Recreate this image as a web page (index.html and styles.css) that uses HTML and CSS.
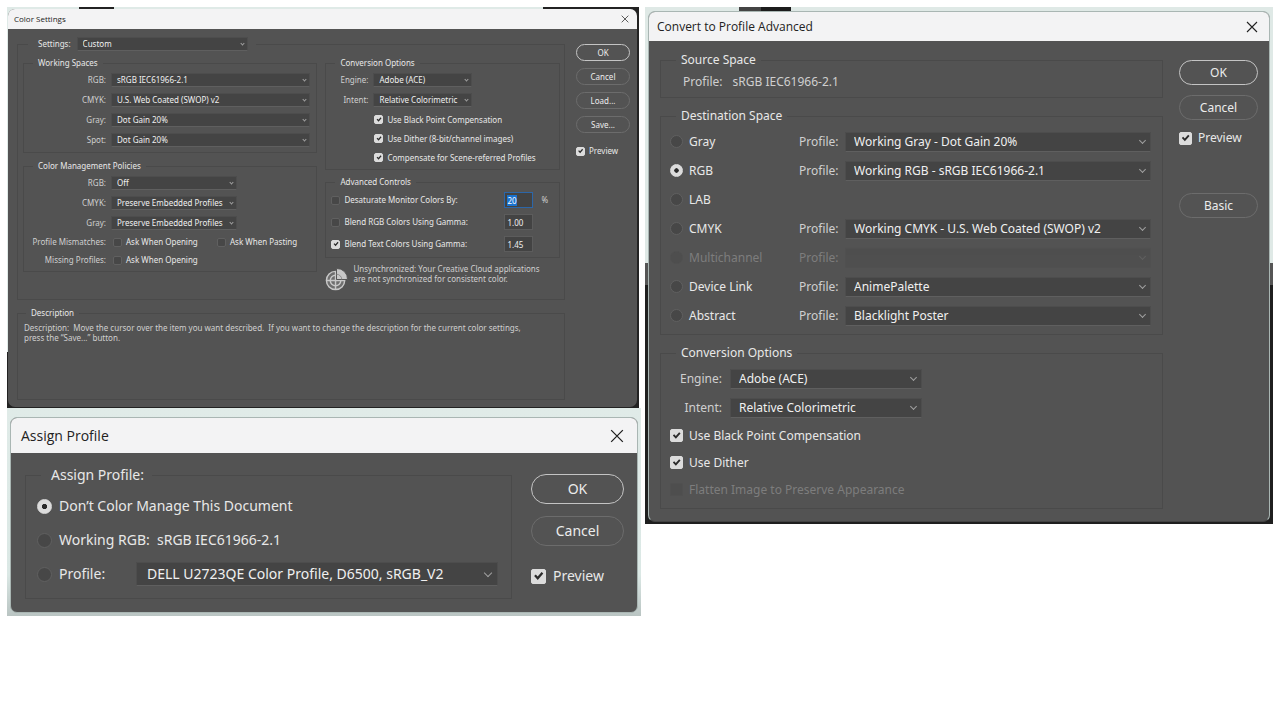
FILE: index.html
```html
<!DOCTYPE html>
<html lang="en">

<head>
  <meta charset="UTF-8">
  <meta name="viewport" content="width=device-width, initial-scale=1.0">
  <title>Photoshop color dialogs</title>
  <link rel="stylesheet" href="styles.css">
</head>

<body>
  <main class="page">
    <div class="column">
      <section class="shot shot-settings">
        <form class="dialog small">
          <header class="titlebar">
            <h2>Color Settings</h2>
            <button type="button" class="close" aria-label="Close"><svg viewBox="0 0 12 12"><path d="M1 1L11 11M11 1L1 11"/></svg></button>
          </header>
          <div class="body">
            <div class="groups">
              <fieldset class="outer">
                <legend>
                  <label for="settings">Settings:</label>
                  <span class="select"><select id="settings"><option>Custom</option></select></span>
                </legend>
                <div class="stack">
                  <fieldset>
                    <legend>Working Spaces</legend>
                    <div class="row"><label class="name" for="ws-rgb">RGB:</label><span class="select"><select id="ws-rgb"><option>sRGB IEC61966-2.1</option></select></span></div>
                    <div class="row"><label class="name" for="ws-cmyk">CMYK:</label><span class="select"><select id="ws-cmyk"><option>U.S. Web Coated (SWOP) v2</option></select></span></div>
                    <div class="row"><label class="name" for="ws-gray">Gray:</label><span class="select"><select id="ws-gray"><option>Dot Gain 20%</option></select></span></div>
                    <div class="row"><label class="name" for="ws-spot">Spot:</label><span class="select"><select id="ws-spot"><option>Dot Gain 20%</option></select></span></div>
                  </fieldset>
                  <fieldset class="policies">
                    <legend>Color Management Policies</legend>
                    <div class="row"><label class="name" for="p-rgb">RGB:</label><span class="select"><select id="p-rgb"><option>Off</option></select></span></div>
                    <div class="row"><label class="name" for="p-cmyk">CMYK:</label><span class="select"><select id="p-cmyk"><option>Preserve Embedded Profiles</option></select></span></div>
                    <div class="row"><label class="name" for="p-gray">Gray:</label><span class="select"><select id="p-gray"><option>Preserve Embedded Profiles</option></select></span></div>
                    <div class="row asks">
                      <span class="name">Profile Mismatches:</span>
                      <label class="check"><input type="checkbox">Ask When Opening</label>
                      <label class="check"><input type="checkbox">Ask When Pasting</label>
                    </div>
                    <div class="row asks">
                      <span class="name">Missing Profiles:</span>
                      <label class="check"><input type="checkbox">Ask When Opening</label>
                    </div>
                  </fieldset>
                </div>
                <div class="stack right">
                  <fieldset class="conversion">
                    <legend>Conversion Options</legend>
                    <div class="row"><label class="name" for="cs-engine">Engine:</label><span class="select"><select id="cs-engine"><option>Adobe (ACE)</option></select></span></div>
                    <div class="row"><label class="name" for="cs-intent">Intent:</label><span class="select"><select id="cs-intent"><option>Relative Colorimetric</option></select></span></div>
                    <label class="check"><input type="checkbox" checked>Use Black Point Compensation</label>
                    <label class="check"><input type="checkbox" checked>Use Dither (8-bit/channel images)</label>
                    <label class="check"><input type="checkbox" checked>Compensate for Scene-referred Profiles</label>
                  </fieldset>
                  <fieldset class="advanced">
                    <legend>Advanced Controls</legend>
                    <div class="row">
                      <label class="check"><input type="checkbox">Desaturate Monitor Colors By:</label>
                      <input type="text" class="num" id="desaturate" value="20" aria-label="Desaturate percent">
                      <span class="unit">%</span>
                    </div>
                    <div class="row">
                      <label class="check"><input type="checkbox">Blend RGB Colors Using Gamma:</label>
                      <input type="text" class="num" value="1.00" aria-label="RGB gamma">
                    </div>
                    <div class="row">
                      <label class="check"><input type="checkbox" checked>Blend Text Colors Using Gamma:</label>
                      <input type="text" class="num" value="1.45" aria-label="Text gamma">
                    </div>
                  </fieldset>
                  <div class="sync">
                    <svg class="sync-icon" viewBox="0 0 24 24">
                      <circle class="disc" cx="11" cy="13" r="10"/>
                      <circle cx="11" cy="13" r="9.5"/>
                      <circle cx="11" cy="13" r="5.5"/>
                      <path d="M1 13H21M11 4V23"/>
                      <path class="wedge" d="M12 12V0.500A11 11 0 0 1 23.500 12Z"/>
                      <path class="wedge-line" d="M12 6.500A5.500 5.500 0 0 1 17.500 12"/>
                    </svg>
                    <p>Unsynchronized: Your Creative Cloud applications<br>are not synchronized for consistent color.</p>
                  </div>
                </div>
              </fieldset>
              <fieldset class="description">
                <legend>Description</legend>
                <p>Description:&nbsp; Move the cursor over the item you want described.&nbsp; If you want to change the description for the current color settings,<br>press the “Save...” button.</p>
              </fieldset>
            </div>
            <div class="actions">
              <button type="button" class="primary">OK</button>
              <button type="button">Cancel</button>
              <button type="button">Load...</button>
              <button type="button">Save...</button>
              <label class="check"><input type="checkbox" checked>Preview</label>
            </div>
          </div>
        </form>
      </section>

      <section class="shot shot-assign">
        <form class="dialog large">
          <header class="titlebar">
            <h2>Assign Profile</h2>
            <button type="button" class="close" aria-label="Close"><svg viewBox="0 0 12 12"><path d="M1 1L11 11M11 1L1 11"/></svg></button>
          </header>
          <div class="body">
            <div class="groups">
              <fieldset>
                <legend>Assign Profile:</legend>
                <div class="row"><label class="check"><input type="radio" name="assign" checked>Don’t Color Manage This Document</label></div>
                <div class="row"><label class="check"><input type="radio" name="assign">Working RGB:&nbsp; sRGB IEC61966-2.1</label></div>
                <div class="row">
                  <label class="check profile"><input type="radio" name="assign">Profile:</label>
                  <span class="select"><select aria-label="Profile"><option>DELL U2723QE Color Profile, D6500, sRGB_V2</option></select></span>
                </div>
              </fieldset>
            </div>
            <div class="actions">
              <button type="button" class="primary">OK</button>
              <button type="button">Cancel</button>
              <label class="check"><input type="checkbox" checked>Preview</label>
            </div>
          </div>
        </form>
      </section>
    </div>

    <section class="shot shot-convert">
      <form class="dialog medium">
        <header class="titlebar">
          <h2>Convert to Profile Advanced</h2>
          <button type="button" class="close" aria-label="Close"><svg viewBox="0 0 12 12"><path d="M1 1L11 11M11 1L1 11"/></svg></button>
        </header>
        <div class="body">
          <div class="groups">
            <fieldset class="source">
              <legend>Source Space</legend>
              <p><span>Profile:</span><span>sRGB IEC61966-2.1</span></p>
            </fieldset>
            <fieldset class="destination">
              <legend>Destination Space</legend>
              <div class="row">
                <label class="check"><input type="radio" name="space">Gray</label>
                <label class="name" for="d-gray">Profile:</label>
                <span class="select"><select id="d-gray"><option>Working Gray - Dot Gain 20%</option></select></span>
              </div>
              <div class="row">
                <label class="check"><input type="radio" name="space" checked>RGB</label>
                <label class="name" for="d-rgb">Profile:</label>
                <span class="select"><select id="d-rgb"><option>Working RGB - sRGB IEC61966-2.1</option></select></span>
              </div>
              <div class="row">
                <label class="check"><input type="radio" name="space">LAB</label>
              </div>
              <div class="row">
                <label class="check"><input type="radio" name="space">CMYK</label>
                <label class="name" for="d-cmyk">Profile:</label>
                <span class="select"><select id="d-cmyk"><option>Working CMYK - U.S. Web Coated (SWOP) v2</option></select></span>
              </div>
              <div class="row disabled">
                <label class="check"><input type="radio" name="space" disabled>Multichannel</label>
                <label class="name" for="d-multi">Profile:</label>
                <span class="select"><select id="d-multi" disabled><option></option></select></span>
              </div>
              <div class="row">
                <label class="check"><input type="radio" name="space">Device Link</label>
                <label class="name" for="d-link">Profile:</label>
                <span class="select"><select id="d-link"><option>AnimePalette</option></select></span>
              </div>
              <div class="row">
                <label class="check"><input type="radio" name="space">Abstract</label>
                <label class="name" for="d-abstract">Profile:</label>
                <span class="select"><select id="d-abstract"><option>Blacklight Poster</option></select></span>
              </div>
            </fieldset>
            <fieldset class="conversion">
              <legend>Conversion Options</legend>
              <div class="row"><label class="name" for="cv-engine">Engine:</label><span class="select"><select id="cv-engine"><option>Adobe (ACE)</option></select></span></div>
              <div class="row"><label class="name" for="cv-intent">Intent:</label><span class="select"><select id="cv-intent"><option>Relative Colorimetric</option></select></span></div>
              <label class="check"><input type="checkbox" checked>Use Black Point Compensation</label>
              <label class="check"><input type="checkbox" checked>Use Dither</label>
              <label class="check disabled"><input type="checkbox" disabled>Flatten Image to Preserve Appearance</label>
            </fieldset>
          </div>
          <div class="actions">
            <button type="button" class="primary">OK</button>
            <button type="button">Cancel</button>
            <label class="check"><input type="checkbox" checked>Preview</label>
            <button type="button" class="basic">Basic</button>
          </div>
        </div>
      </form>
    </section>
  </main>
  <script>
    document.querySelector("#desaturate").select();
  </script>
</body>

</html>
```
FILE: styles.css
```css
*,
*::before,
*::after {
  box-sizing: border-box;
}

body {
  margin: 0;
  background: #fff;
}

.page {
  display: grid;
  grid-template-columns: minmax(0, 634fr) minmax(0, 628fr);
  align-items: start;
  gap: 4px;
  padding: 7px;
}

/* desktop strips behind the dialogs */
.shot-settings {
  margin-right: 2px;
  padding: 2px 2px 1px 1px;
  background:
    linear-gradient(#222, #222) 72px 0 / 35px 2px no-repeat,
    linear-gradient(#222, #222) 100% 0 / 96px 2px no-repeat,
    linear-gradient(#222, #222) 100% 0 / 20px 100% no-repeat,
    linear-gradient(#dfeae7 345px, #222 345px);
}

.shot-assign {
  padding: 9px 3px 3px 3px;
  background: linear-gradient(#e0ebe8, #dbe8e5 80%, #b9c4c2);
}

.shot-convert {
  padding: 4px 3px 2px 3px;
  background:
    linear-gradient(90deg, #444 22px, #1c1c1c 22px) 94px 0 / 52px 5px no-repeat,
    linear-gradient(#dfe9e6 256px, #555 256px, #555 278px, #1f1f1f 278px);
}

.dialog {
  overflow: hidden;
  border-radius: 7px;
  background: #535353;
  color: #e8e8e8;
  font: var(--text) / var(--line) "Noto Sans", Tahoma, sans-serif;
}

.small {
  --text: 8px;
  --line: 12px;
  --row: 20px;
  --control: 14px;
  --mark: 9px;
  --mark-gap: 4px;
  --inset: 5px;
  --arrow: 3px;
}

.medium {
  --text: 12px;
  --line: 16px;
  --row: 29px;
  --control: 20px;
  --mark: 13px;
  --mark-gap: 6px;
  --inset: 8px;
  --arrow: 5px;
  border: 1px solid #a9b6b3;
  border-bottom-color: #444;
}

.large {
  --text: 14px;
  --line: 20px;
  --row: 34px;
  --control: 24px;
  --mark: 15px;
  --mark-gap: 7px;
  --inset: 10px;
  --arrow: 6px;
  border: 1px solid #a9b6b3;
}

.titlebar {
  display: flex;
  align-items: center;
  justify-content: space-between;
  background: #f3f3f4;
  color: #222;
}

.small .titlebar {
  height: 20px;
  padding: 0 8px 0 6px;
}

.medium .titlebar {
  height: 29px;
  padding: 0 11px 0 8px;
}

.large .titlebar {
  height: 35px;
  padding: 0 13px 0 10px;
}

h2 {
  margin: 0;
  font: var(--text) / var(--line) "Open Sans", "Noto Sans", sans-serif;
}

.close {
  display: flex;
  padding: 0;
  border: 0;
  background: none;
}

.close svg {
  width: var(--text);
  height: var(--text);
  fill: none;
  stroke: #222;
  stroke-width: 1.1;
}

.body {
  display: flex;
}

.small .body {
  gap: 11px;
  padding: 8px 7px 7px 9px;
}

.medium .body {
  gap: 16px;
  padding: 11px 11px 12px 11px;
}

.large .body {
  gap: 19px;
  padding: 12px 13px 13px 14px;
}

.groups {
  display: flex;
  flex: 1;
  flex-direction: column;
  min-width: 0;
}

.small .groups {
  gap: 7px;
}

.medium .groups {
  gap: 10px;
}

fieldset {
  min-width: 0;
  margin: 0;
  padding: 0;
  border: 1px solid #4a4a4a;
}

legend {
  margin-left: 9px;
  padding: 0 5px;
}

p {
  margin: 0;
}

.row {
  display: flex;
  align-items: center;
  height: var(--row);
}

.name {
  color: #cfcfcf;
}

.select {
  position: relative;
  display: flex;
  flex: 1;
}

.select::after {
  content: "";
  position: absolute;
  top: calc(50% - var(--arrow) / 2 - 1px);
  right: calc(var(--arrow) + 1px);
  width: var(--arrow);
  height: var(--arrow);
  border: solid #a0a0a0;
  border-width: 0 1px 1px 0;
  transform: rotate(45deg);
  pointer-events: none;
}

select {
  width: 100%;
  height: var(--control);
  padding: 0 var(--inset);
  border: 1px solid #4d4d4d;
  border-bottom-color: #5f5f5f;
  border-radius: 1px;
  appearance: none;
  background: #444;
  color: #f0f0f0;
  font: inherit;
}

.check {
  display: flex;
  align-items: center;
  gap: var(--mark-gap);
  white-space: nowrap;
}

.check input {
  position: relative;
  flex: none;
  width: var(--mark);
  height: var(--mark);
  margin: 0;
  border: 1px solid #606060;
  border-radius: 2px;
  appearance: none;
  background: #474747;
}

.check input:checked {
  border-color: #dcdcdc;
  background: #dcdcdc;
}

.check input[type="checkbox"]:checked::before {
  content: "";
  position: absolute;
  inset: 10%;
  background: #2b2b2b;
  clip-path: polygon(8% 50%, 24% 36%, 42% 56%, 80% 12%, 96% 26%, 43% 88%);
}

.check input[type="radio"] {
  border-radius: 50%;
}

.check input[type="radio"]:checked {
  background: radial-gradient(circle, #2b2b2b 25%, #dcdcdc 32%);
}

.disabled,
.disabled .name {
  color: #7d7d7d;
}

.disabled input,
.disabled select {
  border-color: #505050;
  background: #4e4e4e;
}

.disabled .select::after {
  border-color: #606060;
}

.actions {
  display: flex;
  flex: none;
  flex-direction: column;
}

.actions button {
  padding: 0;
  border: 1px solid #6c6c6c;
  border-radius: 20px;
  background: none;
  color: #ececec;
  font: inherit;
}

.actions .primary {
  border-color: #c4c4c4;
}

/* Color Settings */
.small .actions {
  gap: 7px;
  width: 54px;
  padding-top: 7px;
}

.small .actions button {
  height: 17px;
}

.small .actions .check {
  margin-top: 5px;
}

.outer {
  display: grid;
  grid-template-columns: minmax(0, 295fr) minmax(0, 235fr);
  gap: 8px;
  padding: 6px 4px 8px 5px;
}

.outer > legend {
  display: flex;
  align-items: center;
  gap: 6px;
  margin-left: 5px;
  padding: 0 8px 0 10px;
}

.outer > legend .select {
  width: 171px;
}

.stack {
  display: flex;
  flex-direction: column;
  gap: 7px;
}

.stack.right {
  gap: 6px;
}

.stack fieldset {
  padding: 1px 6px 2px 0;
}

.stack .name {
  flex: none;
  width: 82px;
  margin-right: 5px;
  text-align: right;
}

.policies .select {
  flex: none;
  width: 126px;
}

.row.asks {
  height: 18px;
}

.asks .name {
  margin-right: 7px;
}

.asks .check {
  flex: none;
  width: 104px;
}

.policies .asks .check:last-child {
  width: auto;
}

.stack .conversion .name {
  width: 42px;
}

.right .select {
  flex: none;
  width: 99px;
}

.conversion > .check {
  height: 19px;
  padding-left: 48px;
}

.advanced .row {
  height: 22px;
  padding-left: 5px;
}

.advanced .check {
  width: 173px;
}

.num {
  width: 29px;
  height: 16px;
  padding: 0 2px;
  border: 1px solid #5c5c5c;
  background: #434343;
  color: #f0f0f0;
  font: inherit;
}

.num:focus {
  border-color: #2c66a8;
  outline: 0;
}

.num::selection {
  background: #1a73d0;
  color: #fff;
}

.unit {
  margin-left: 8px;
  color: #cfcfcf;
}

.sync {
  display: flex;
  gap: 5px;
  color: #cfcfcf;
  line-height: 10px;
  white-space: nowrap;
}

.sync-icon {
  flex: none;
  width: 23px;
  height: 23px;
  margin-top: 4px;
  fill: none;
  stroke: #c8c8c8;
  stroke-width: 1.5;
}

.sync-icon .disc {
  fill: #6e6e6e;
  stroke: none;
}

.sync-icon .wedge {
  fill: #c8c8c8;
  stroke: #535353;
  stroke-width: 1;
}

.sync-icon .wedge-line {
  stroke: #8a8a8a;
  stroke-width: 1;
}

.description {
  padding: 4px 6px 56px;
  color: #cfcfcf;
  line-height: 10px;
}

.description legend {
  margin-left: 2px;
  color: #e8e8e8;
  line-height: 12px;
}

/* Convert to Profile */
.medium legend {
  margin-left: 6px;
}

.medium .actions {
  gap: 10px;
  width: 79px;
  padding-top: 8px;
}

.medium .actions button {
  height: 25px;
}

.medium .actions .basic {
  margin-top: 37px;
}

.medium fieldset {
  padding: 3px 11px 4px 9px;
}

.source p {
  display: flex;
  gap: 10px;
  padding: 3px 13px;
  color: #cfcfcf;
}

.destination .check {
  width: 129px;
}

.destination .name {
  width: 46px;
}

.medium .conversion {
  padding-bottom: 5px;
}

.medium .conversion .name {
  width: 52px;
  margin-right: 8px;
  text-align: right;
}

.medium .conversion .select {
  flex: none;
  width: 192px;
}

.medium .conversion > .check {
  height: 27px;
  padding-left: 0;
}

/* Assign Profile */
.large legend {
  margin-left: 4px;
  padding: 0 8px 0 10px;
}

.large fieldset {
  padding: 4px 13px 7px 11px;
}

.large .profile {
  width: 99px;
}

.large .actions {
  gap: 12px;
  width: 93px;
  padding-top: 9px;
}

.large .actions button {
  height: 30px;
}

.large .actions .check {
  margin-top: 8px;
}
```
